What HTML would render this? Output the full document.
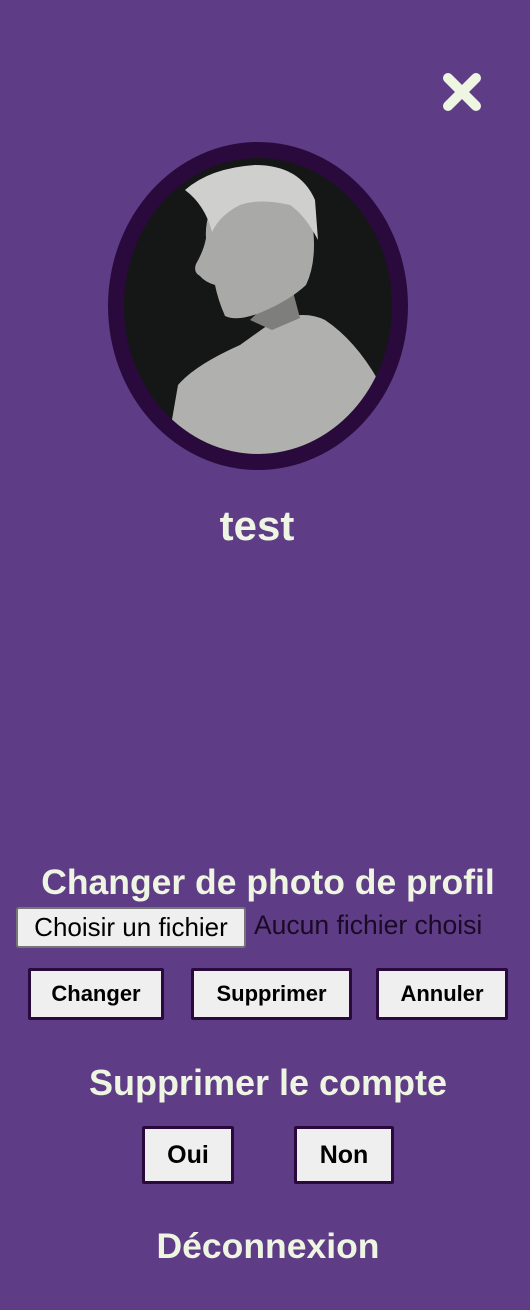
<!DOCTYPE html>
<html><head><meta charset="utf-8"><style>
html,body{margin:0;padding:0}
body{width:530px;height:1310px;background:#5f3d86;position:relative;overflow:hidden;font-family:"Liberation Sans",sans-serif;color:#eef5e2}
.abs{position:absolute}
.t{position:absolute;left:0;width:536px;text-align:center;font-weight:bold;white-space:nowrap}
.btn{position:absolute;background:#efefef;border:3px solid #2a0a3d;border-radius:2px;box-sizing:border-box;color:#000;font:bold 22px "Liberation Sans",sans-serif;text-align:center}
</style></head><body>
<svg class="abs" style="left:0;top:0" width="530" height="500">
<defs><clipPath id="c"><ellipse cx="258" cy="306" rx="134" ry="148"/></clipPath></defs>
<line x1="448" y1="78" x2="476" y2="106" stroke="#eef5e2" stroke-width="10" stroke-linecap="round"/>
<line x1="476" y1="78" x2="448" y2="106" stroke="#eef5e2" stroke-width="10" stroke-linecap="round"/>
<ellipse cx="258" cy="306" rx="150" ry="164" fill="#2a0a3d"/>
<ellipse cx="258" cy="306" rx="134" ry="148" fill="#151616"/>
<g clip-path="url(#c)">
<path d="M165 460 L178 385 Q195 365 240 345 L268 325 Q300 308 325 320 Q355 340 378 380 L395 460 Z" fill="#b0b0ae"/>
<path d="M250 320 Q270 300 292 288 L300 318 L272 330 Z" fill="#7e7e7c"/>
<path d="M210 210 Q225 190 260 188 Q300 190 312 220 Q318 260 306 285 Q290 300 262 312 Q238 322 225 316 Q218 300 215 285 Q205 282 200 276 Q193 272 196 264 Q204 250 206 238 Q205 225 210 210 Z" fill="#a9a9a7"/>
<path d="M185 190 Q210 168 255 165 Q300 165 315 200 L318 240 Q305 215 290 205 Q260 198 240 205 Q220 215 212 232 Q205 205 185 190 Z" fill="#cfcfcd"/>
</g>
</svg>
<div class="t" style="top:502px;font-size:42px;left:-11px">test</div>
<div class="t" style="top:862px;font-size:35.5px">Changer de photo de profil</div>
<div class="abs" style="left:16px;top:907px;width:230px;height:41px;box-sizing:border-box;background:#efefef;border:2px solid #767676;border-radius:3px;color:#000;font:26px 'Liberation Sans',sans-serif;text-align:center;line-height:37px;white-space:nowrap">Choisir un fichier</div>
<div class="abs" style="left:254px;top:910px;color:#1a0a25;font:26.5px 'Liberation Sans',sans-serif;white-space:nowrap">Aucun fichier choisi</div>
<div class="btn" style="left:28px;top:968px;width:136px;height:52px;line-height:46px">Changer</div>
<div class="btn" style="left:191px;top:968px;width:161px;height:52px;line-height:46px">Supprimer</div>
<div class="btn" style="left:376px;top:968px;width:132px;height:52px;line-height:46px">Annuler</div>
<div class="t" style="top:1062px;font-size:36px">Supprimer le compte</div>
<div class="btn" style="left:142px;top:1126px;width:92px;height:58px;line-height:52px;font-size:25px">Oui</div>
<div class="btn" style="left:294px;top:1126px;width:100px;height:58px;line-height:52px;font-size:25px">Non</div>
<div class="t" style="top:1226px;font-size:35.5px">Déconnexion</div>
</body></html>
